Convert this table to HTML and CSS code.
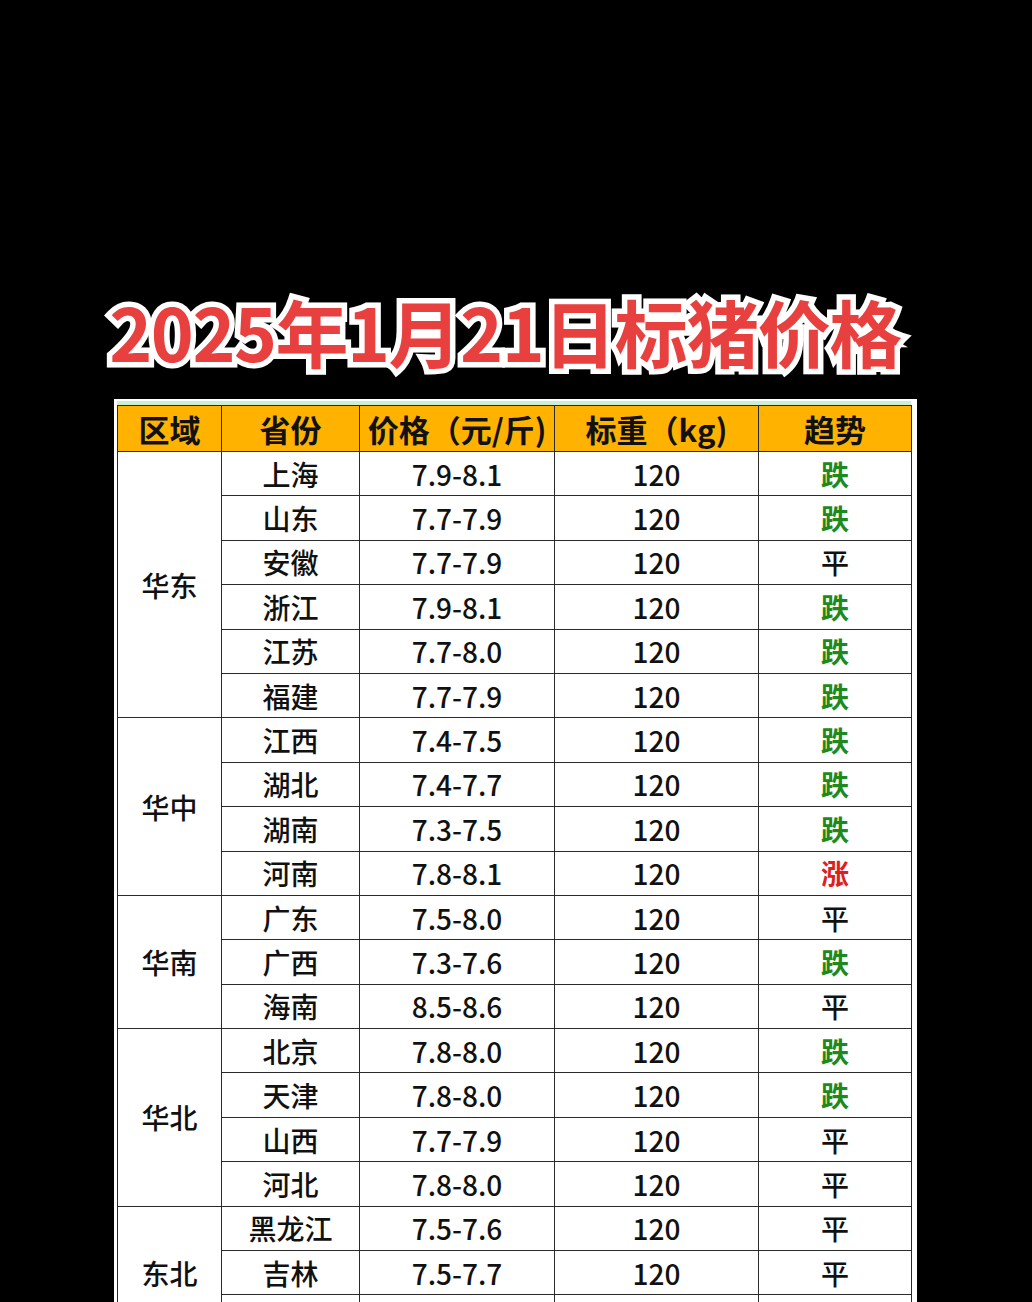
FILE: index.html
```html
<!DOCTYPE html>
<html lang="zh">
<head>
<meta charset="utf-8">
<link rel="stylesheet" href="styles.css">
</head>
<body>
<div class="page">
  <div class="title-area">
    <h1 class="title">2025年1月21日标猪价格</h1>
  </div>
  <div class="panel">
    <div class="strip"></div>
    <table class="grid">
      <colgroup>
        <col class="c1"><col class="c2"><col class="c3"><col class="c4"><col class="c5">
      </colgroup>
      <thead>
        <tr><th>区域</th><th>省份</th><th>价格（元/斤)</th><th>标重（kg)</th><th>趋势</th></tr>
      </thead>
      <tbody>
        <tr><td rowspan="6" class="region">华东</td><td>上海</td><td>7.9-8.1</td><td>120</td><td class="down">跌</td></tr>
        <tr><td>山东</td><td>7.7-7.9</td><td>120</td><td class="down">跌</td></tr>
        <tr><td>安徽</td><td>7.7-7.9</td><td>120</td><td>平</td></tr>
        <tr><td>浙江</td><td>7.9-8.1</td><td>120</td><td class="down">跌</td></tr>
        <tr><td>江苏</td><td>7.7-8.0</td><td>120</td><td class="down">跌</td></tr>
        <tr><td>福建</td><td>7.7-7.9</td><td>120</td><td class="down">跌</td></tr>
        <tr><td rowspan="4" class="region">华中</td><td>江西</td><td>7.4-7.5</td><td>120</td><td class="down">跌</td></tr>
        <tr><td>湖北</td><td>7.4-7.7</td><td>120</td><td class="down">跌</td></tr>
        <tr><td>湖南</td><td>7.3-7.5</td><td>120</td><td class="down">跌</td></tr>
        <tr><td>河南</td><td>7.8-8.1</td><td>120</td><td class="up">涨</td></tr>
        <tr><td rowspan="3" class="region">华南</td><td>广东</td><td>7.5-8.0</td><td>120</td><td>平</td></tr>
        <tr><td>广西</td><td>7.3-7.6</td><td>120</td><td class="down">跌</td></tr>
        <tr><td>海南</td><td>8.5-8.6</td><td>120</td><td>平</td></tr>
        <tr><td rowspan="4" class="region">华北</td><td>北京</td><td>7.8-8.0</td><td>120</td><td class="down">跌</td></tr>
        <tr><td>天津</td><td>7.8-8.0</td><td>120</td><td class="down">跌</td></tr>
        <tr><td>山西</td><td>7.7-7.9</td><td>120</td><td>平</td></tr>
        <tr><td>河北</td><td>7.8-8.0</td><td>120</td><td>平</td></tr>
        <tr><td rowspan="3" class="region">东北</td><td>黑龙江</td><td>7.5-7.6</td><td>120</td><td>平</td></tr>
        <tr><td>吉林</td><td>7.5-7.7</td><td>120</td><td>平</td></tr>
        <tr><td></td><td></td><td></td><td></td></tr>
      </tbody>
    </table>
  </div>
</div>
</body>
</html>
```
FILE: styles.css
```css
html, body {
  margin: 0;
  padding: 0;
  background: #000;
}
body {
  font-family: "Noto Sans CJK SC", "Noto Sans", sans-serif;
  width: 1032px;
  height: 1302px;
  overflow: hidden;
}
.page {
  display: flex;
  flex-direction: column;
}
.title-area {
  height: 399px;
  display: flex;
  align-items: flex-end;
  justify-content: center;
  padding-right: 22px;
  box-sizing: border-box;
}
.title {
  margin: 0 0 32px 0;
  font-size: 73px;
  line-height: 1;
  font-weight: 700;
  color: #e8403f;
  letter-spacing: -1.5px;
  -webkit-text-stroke: 11px #fff;
  paint-order: stroke fill;
  white-space: nowrap;
}
.panel {
  margin-left: 114px;
  width: 803px;
  background: #fff;
  padding: 0 6px 0 3px;
  box-sizing: border-box;
}
.strip {
  height: 4px;
  margin-top: 2px;
  background: #c9f0d6;
}
.grid {
  border-collapse: collapse;
  width: 794px;
  table-layout: fixed;
}
.c1 { width: 104px; }
.c2 { width: 138px; }
.c3 { width: 195px; }
.c4 { width: 204px; }
.c5 { width: 153px; }
.grid th, .grid td {
  border: 1px solid #2a2a2a;
  text-align: center;
  padding: 0;
  color: #111;
  white-space: nowrap;
}
.grid th {
  background: #ffb300;
  height: 45px;
  font-size: 31px;
  font-weight: 700;
  line-height: 1;
}
.grid td {
  height: 43.4px;
  font-size: 28px;
  font-weight: 500;
  line-height: 1;
}
.grid td.region {
  font-weight: 500;
}
.grid td.down {
  color: #1e8a1e;
  font-weight: 700;
}
.grid td.up {
  color: #e01e1e;
  font-weight: 700;
}
```
